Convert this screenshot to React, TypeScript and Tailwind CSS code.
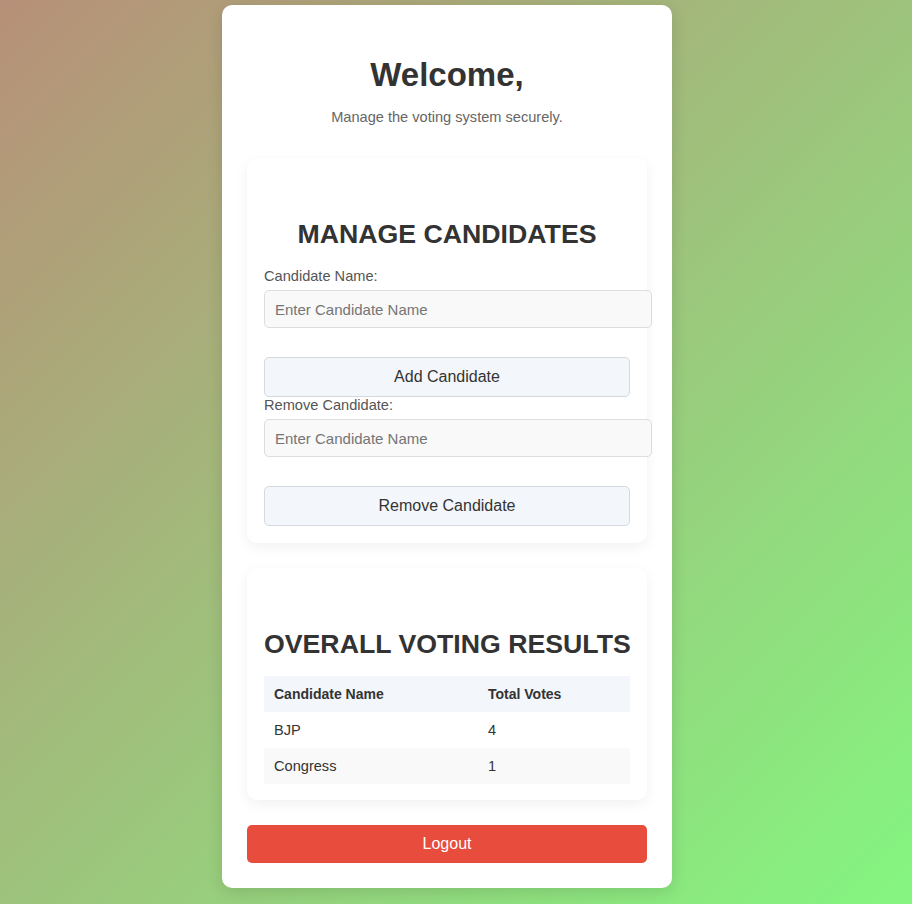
import React from "react";

const font = { fontFamily: '"Liberation Sans", Arial, Helvetica, sans-serif' };

function Field({ label, first }: { label: string; first?: boolean }) {
  return (
    <div>
      <label
        className={`block text-[14.6px] leading-[17px] text-[#555] mb-[5px] ${first ? "mt-[19px]" : ""}`}
      >
        {label}
      </label>
      <input
        type="text"
        placeholder="Enter Candidate Name"
        className="block w-[388px] h-[38px] px-[10px] text-[15px] text-[#333] bg-[#f9f9f9] border border-[#dddddd] rounded-[5px] placeholder:text-[#757575] outline-none"
        style={font}
      />
    </div>
  );
}

function Btn({ children }: { children: React.ReactNode }) {
  return (
    <button
      className="mt-[29px] block w-full h-[40px] text-[16px] text-[#333] bg-[#f3f6fa] border border-[#d4d9df] rounded-[5px]"
      style={font}
    >
      {children}
    </button>
  );
}

export default function App() {
  const rows = [
    { name: "BJP", votes: 4 },
    { name: "Congress", votes: 1 },
  ];
  return (
    <div
      className="min-h-screen w-full bg-[linear-gradient(135deg,#b79078,#84f680)] flex justify-center pr-[18px]"
      style={font}
    >
      <div className="mt-[5px] mb-[16px] w-[450px] bg-white rounded-[10px] shadow-[0_4px_16px_rgba(0,0,0,0.12)] px-[25px] pt-[25px] pb-[25px] self-start">
        <h1 className="mt-[26px] text-center text-[33px] leading-[37px] font-bold text-[#333]">
          Welcome,
        </h1>
        <p className="mt-[16px] text-center text-[14.6px] leading-[17px] text-[#666]">
          Manage the voting system securely.
        </p>

        <section className="mt-[32px] bg-white rounded-[10px] shadow-[0_4px_14px_rgba(0,0,0,0.06)] p-[17px]">
          <h2 className="mt-[44px] text-center text-[26.7px] leading-[30px] font-bold text-[#333] uppercase">
            Manage Candidates
          </h2>
          <Field label="Candidate Name:" first />
          <Btn>Add Candidate</Btn>
          <Field label="Remove Candidate:" />
          <Btn>Remove Candidate</Btn>
        </section>

        <section className="mt-[25px] bg-white rounded-[10px] shadow-[0_4px_14px_rgba(0,0,0,0.06)] px-[17px] pt-[17px] pb-[16px]">
          <h2 className="mt-[44px] text-center text-[26.7px] leading-[30px] font-bold text-[#333] uppercase whitespace-nowrap">
            Overall Voting Results
          </h2>
          <table className="mt-[17px] w-full border-collapse text-left">
            <thead>
              <tr className="bg-[#f3f6fa] h-[36px]">
                <th className="w-[214px] px-[10px] text-[14px] font-bold text-[#333]">Candidate Name</th>
                <th className="px-[10px] text-[14px] font-bold text-[#333]">Total Votes</th>
              </tr>
            </thead>
            <tbody>
              {rows.map((r, i) => (
                <tr key={r.name} className={`h-[36px] ${i % 2 === 1 ? "bg-[#f9f9f9]" : "bg-white"}`}>
                  <td className="px-[10px] pt-[2px] text-[14.6px] text-[#333]">{r.name}</td>
                  <td className="px-[10px] pt-[2px] text-[14.6px] text-[#333]">{r.votes}</td>
                </tr>
              ))}
            </tbody>
          </table>
        </section>

        <button
          className="mt-[25px] block w-full h-[38px] bg-[#e74c3c] text-white text-[16px] rounded-[5px]"
          style={font}
        >
          Logout
        </button>
      </div>
    </div>
  );
}
